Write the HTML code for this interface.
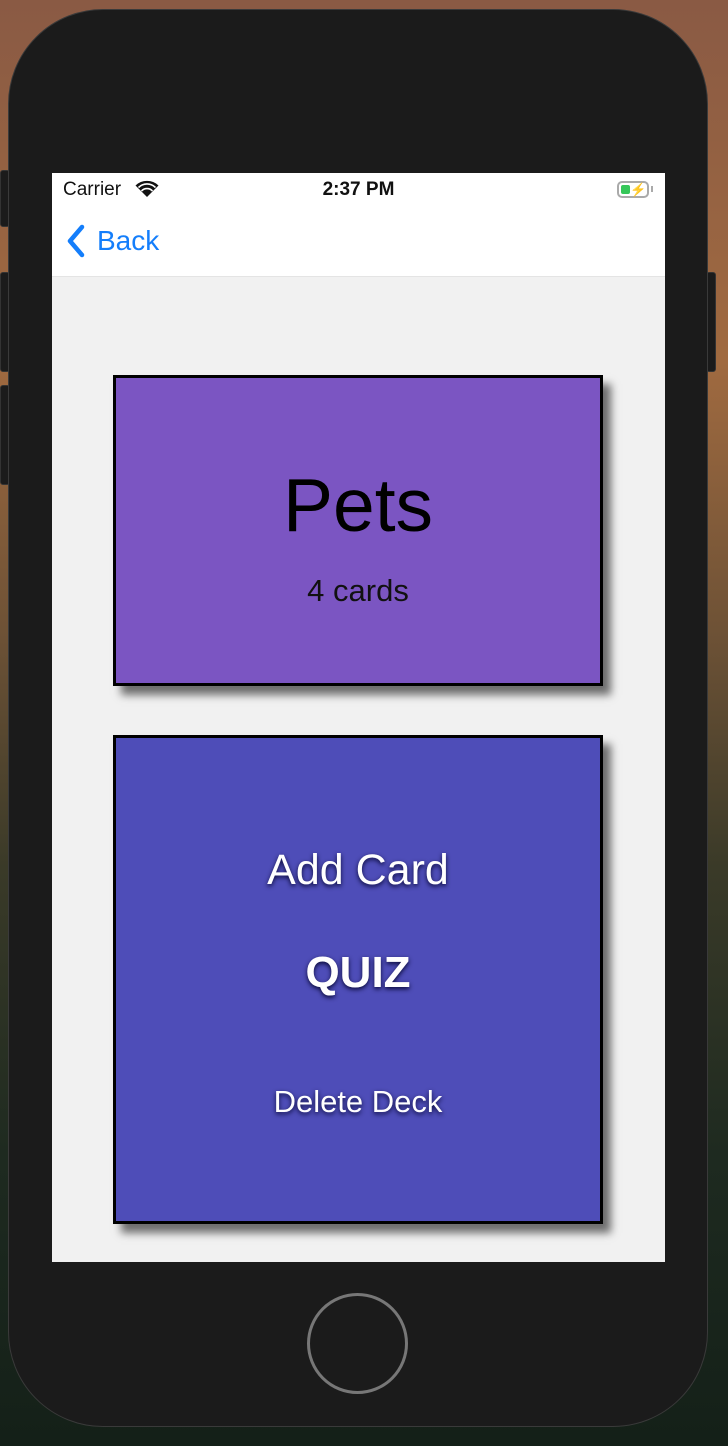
<!DOCTYPE html>
<html><head><meta charset="utf-8"><style>
*{margin:0;padding:0;box-sizing:border-box}
body{width:728px;height:1446px;overflow:hidden;position:relative;font-family:"Liberation Sans",sans-serif;
background:linear-gradient(180deg,#8a5a44 0%,#a06a40 25%,#6a5035 45%,#3a3a28 60%,#1e2a20 80%,#142018 100%);}
.phone{position:absolute;left:8px;top:9px;width:700px;height:1418px;background:#1b1b1b;border-radius:95px;border:1px solid #3a3a3a}
.btn{position:absolute;background:#1b1b1b;border:1px solid #333;width:10px;border-radius:3px}
.screen{position:absolute;left:52px;top:173px;width:613px;height:1089px;background:#f1f1f1;overflow:hidden}
.status{position:absolute;left:0;top:0;width:613px;height:104px;background:#fff;border-bottom:1px solid #e4e4e4}
.card{position:absolute;left:61px;width:490px;border:3px solid #000;box-shadow:8px 9px 8px rgba(0,0,0,.55);text-align:center}
.w{color:#fff;text-shadow:0 2px 5px rgba(0,0,40,.9);position:absolute;left:0;right:0}
.home{position:absolute;left:307px;top:1293px;width:101px;height:101px;border:3px solid #777;border-radius:50%}
</style></head><body>
<div class="btn" style="left:0;top:170px;height:57px"></div>
<div class="btn" style="left:0;top:272px;height:100px"></div>
<div class="btn" style="left:0;top:385px;height:100px"></div>
<div class="btn" style="left:706px;top:272px;height:100px"></div>
<div class="phone"></div>
<div class="home"></div>
<div class="screen">
 <div class="status">
  <div style="position:absolute;left:11px;top:6px;font-size:19px;color:#111">Carrier</div>
  <svg style="position:absolute;left:83px;top:7px" width="24" height="18" viewBox="0 0 24 18"><path d="M12 17L0.5 5.5a16.5 16.5 0 0 1 23 0z" fill="#111"/><path d="M3.5 7.5a12 12 0 0 1 17 0 M6.5 11a7.5 7.5 0 0 1 11 0" stroke="#fff" stroke-width="1.6" fill="none"/></svg>
  <div style="position:absolute;left:0;right:0;top:6px;text-align:center;font-size:19px;font-weight:bold;color:#111">2:37 PM</div>
  <div style="position:absolute;left:565px;top:8px;width:32px;height:17px;border:2px solid #aaa;border-radius:5px"><div style="position:absolute;left:2px;top:2px;width:9px;height:9px;background:#35c759;border-radius:2px"></div><div style="position:absolute;left:11px;top:-1px;font-size:13px;font-weight:bold">⚡</div></div>
  <div style="position:absolute;left:599px;top:13px;width:2px;height:6px;background:#aaa"></div>
  <svg style="position:absolute;left:13px;top:51px" width="22" height="34" viewBox="0 0 22 34"><path d="M17 3L5 17l12 14" stroke="#147efb" stroke-width="4.5" fill="none" stroke-linecap="round" stroke-linejoin="round"/></svg>
  <div style="position:absolute;left:45px;top:52px;font-size:28px;color:#147efb">Back</div>
 </div>
 <div class="card" style="top:202px;height:311px;background:#7b55c2">
  <div style="position:absolute;left:0;right:0;top:90px;font-size:75px;color:#000;line-height:1">Pets</div>
  <div style="position:absolute;left:0;right:0;top:195px;font-size:31px;color:#111">4 cards</div>
 </div>
 <div class="card" style="top:562px;height:489px;background:#4e4db8">
  <div class="w" style="top:108px;font-size:43px">Add Card</div>
  <div class="w" style="top:210px;font-size:44px;font-weight:bold">QUIZ</div>
  <div class="w" style="top:346px;font-size:31px">Delete Deck</div>
 </div>
</div>
</body></html>
